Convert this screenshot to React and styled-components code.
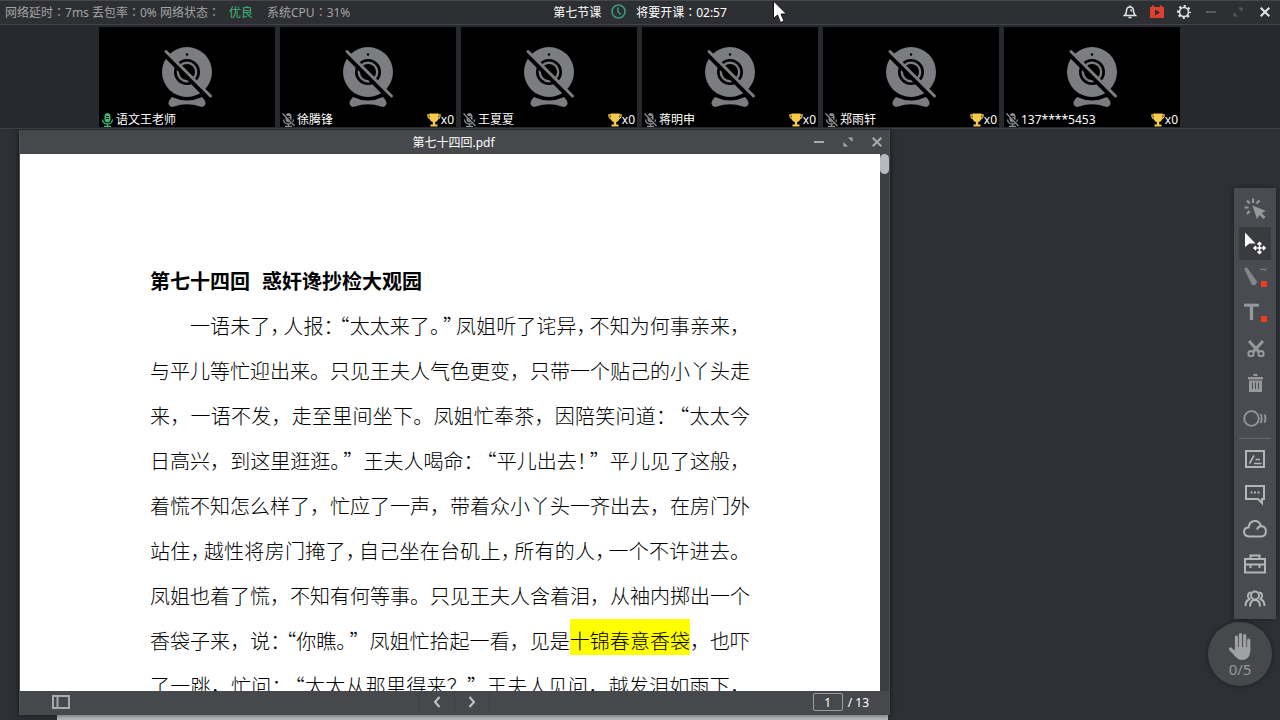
import React from 'react'
import { useState } from 'react'
import styled, { createGlobalStyle } from 'styled-components'

const GlobalStyle = createGlobalStyle`
  * {
    box-sizing: border-box;
  }
  html, body, #root {
    height: 100%;
    margin: 0;
  }
  body {
    overflow: hidden;
    font-family: "Noto Sans", "Noto Sans CJK SC", sans-serif;
    font-size: 12px;
    color: #fff;
  }
  button, input {
    font: inherit;
    color: inherit;
  }
`

const Page = styled.div`
  height: 100vh;
  display: flex;
  flex-direction: column;
  background: #2d3035;
`

const TopBar = styled.header`
  height: 25px;
  flex: none;
  display: grid;
  grid-template-columns: 1fr auto 1fr;
  align-items: center;
  padding: 0 5px 2px;
  background: #2e2f33;
  border-top: 1px solid #45474b;
  border-bottom: 1px solid #414346;
`

const Status = styled.div`
  display: flex;
  color: #a2a3a4;
  white-space: pre;
`

const Good = styled.span`
  color: #3fb878;
  margin: 0 14px 0 9px;
`

/* TC 字体的冒号居中 */
const Colon = styled.span`
  font-family: "Noto Sans CJK TC", sans-serif;
`

const Lesson = styled.div`
  display: flex;
  align-items: center;
  gap: 10px;
`

const TopActions = styled.div`
  display: flex;
  justify-content: flex-end;
  gap: 7px;
`

const IconButton = styled.button`
  width: 20px;
  height: 20px;
  padding: 0;
  border: 0;
  display: flex;
  align-items: center;
  justify-content: center;
  background: none;
  color: ${props => props.$color || '#a9aaac'};
`

const CameraBar = styled.section`
  height: 104px;
  flex: none;
  display: flex;
  justify-content: center;
  gap: 5px;
  padding: 2px 1px 2px 0;
  background: #26292e;
  border-bottom: 1px solid #3b3e42;
`

const CameraBox = styled.div`
  width: 176px;
  height: 100px;
  display: flex;
  flex-direction: column;
  justify-content: flex-end;
  align-items: center;
  gap: 2px;
  background: #000;
`

const CameraFoot = styled.div`
  width: 100%;
  height: 16px;
  display: flex;
  align-items: center;
  padding: 2px 2px 0;
  line-height: 14px;
`

const Name = styled.span`
  flex: 1;
  padding-left: 2px;
`

const Desk = styled.main`
  flex: 1;
  min-height: 0;
  position: relative;
  overflow: hidden;
`

const BackWindow = styled.div`
  position: absolute;
  left: 57px;
  top: 586px;
  width: 831px;
  height: 40px;
  background: #b9bdbd;
`

const PdfWindow = styled.section`
  position: absolute;
  left: 19px;
  top: 1px;
  width: 871px;
  height: 585px;
  display: flex;
  flex-direction: column;
  background: #47484c;
  border: 1px solid #4c4d51;
  border-top: 0;
  border-bottom: 0;
  box-shadow: 0 0 6px rgba(0, 0, 0, 0.6);
`

const TitleBar = styled.div`
  height: 24px;
  flex: none;
  display: grid;
  grid-template-columns: 1fr auto 1fr;
  align-items: center;
  padding: 0 2px 0 0;
`

const FileName = styled.h1`
  grid-column: 2;
  margin: 0;
  font-size: 12px;
  font-weight: 400;
`

const WindowActions = styled.div`
  display: flex;
  justify-content: flex-end;
  gap: 9px;
`

const Viewer = styled.div`
  flex: 1;
  min-height: 0;
  display: flex;
  background: #3d3e40;
`

const Paper = styled.article`
  flex: 1;
  overflow: hidden;
  padding: 104px 130px 0;
  background: #fff;
  color: #000;
  font-family: "Noto Sans CJK SC", sans-serif;
  font-size: 20px;
  line-height: 45px;
  text-spacing-trim: space-all;
`

const Chapter = styled.h2`
  margin: 0;
  display: flex;
  gap: 12px;
  font-size: 20px;
  font-weight: 700;
`

const Line = styled.p`
  margin: 0;
  padding-left: ${props => (props.$indent ? '40px' : '0')};
  font-weight: 300;
  white-space: nowrap;
  text-align: justify;
  text-align-last: justify;
`

const Tight = styled.span`
  font-feature-settings: "halt";
  padding: ${props => (props.$open ? '0 0 0 3px' : '0 3px 0 0')};
`

const Marked = styled.mark`
  padding-top: 7px;
  background: #ff0;
  color: #000;
`

const ScrollThumb = styled.div`
  width: 9px;
  height: 20px;
  border-radius: 5px;
  background: #b4babf;
`

const PdfFoot = styled.div`
  height: 24px;
  flex: none;
  display: grid;
  grid-template-columns: 1fr auto 1fr;
  align-items: center;
  padding: 0 20px 2px;
`

const Contents = styled(IconButton)`
  margin-left: 11px;
`

const Pager = styled.div`
  display: flex;
  border-right: 1px solid #3f4044;
`

const PageButton = styled(IconButton)`
  width: 35px;
  height: 22px;
  border-left: 1px solid #3f4044;
  color: #c3c4c6;
`

const PageNumber = styled.label`
  display: flex;
  justify-content: flex-end;
  align-items: center;
  gap: 5px;
`

const PageInput = styled.input`
  width: 30px;
  height: 18px;
  padding: 0;
  border: 1px solid #9b9c9e;
  border-radius: 2px;
  background: none;
  text-align: center;
`

const ToolBar = styled.nav`
  position: absolute;
  right: 4px;
  top: 59px;
  width: 42px;
  padding: 3px 0;
  display: flex;
  flex-direction: column;
  align-items: center;
  background: #4a4b50;
  box-shadow: 0 0 5px rgba(0, 0, 0, 0.4);
`

const ToolButton = styled(IconButton)`
  width: 32px;
  height: 33px;
  margin: 1px 0;
  background: ${props => (props.$active ? '#3a3b3f' : 'none')};
  color: ${props => (props.$bright ? '#b4b5b7' : '#97989b')};
`

const Divider = styled.hr`
  width: 32px;
  margin: 2px 0;
  border: 0;
  border-top: 1px solid #68696d;
`

const HandButton = styled.button`
  position: absolute;
  right: 8px;
  top: 493px;
  width: 64px;
  height: 64px;
  padding: 10px 0 0;
  border: 0;
  border-radius: 50%;
  display: flex;
  flex-direction: column;
  align-items: center;
  background: #47484c;
  color: #98999c;
  font-size: 15px;
  line-height: 18px;
  box-shadow: 0 0 5px rgba(0, 0, 0, 0.4);
`

const Pointer = styled.svg`
  position: absolute;
  left: 773px;
  top: 0;
`

const members = [
  { name: '语文王老师', teacher: true },
  { name: '徐腾锋', cup: 0 },
  { name: '王夏夏', cup: 0 },
  { name: '蒋明申', cup: 0 },
  { name: '郑雨轩', cup: 0 },
  { name: '137****5453', cup: 0 },
]

// |x| 挤压的标点, [x] 高亮
const lines = [
  '一语未了|，|人报|：||“|太太来了|。||”|凤姐听了诧异|，|不知为何事亲来，',
  '与平儿等忙迎出来。只见王夫人气色更变，只带一个贴己的小丫头走',
  '来，一语不发，走至里间坐下。凤姐忙奉茶，因陪笑问道：|“|太太今',
  '日高兴，到这里逛逛|。|”王夫人喝命：|“|平儿出去|！|”平儿见了这般，',
  '着慌不知怎么样了，忙应了一声，带着众小丫头一齐出去，在房门外',
  '站住|，|越性将房门掩了|，|自己坐在台矶上|，|所有的人|，|一个不许进去。',
  '凤姐也着了慌，不知有何等事。只见王夫人含着泪，从袖内掷出一个',
  '香袋子来，说|：||“|你瞧|。|”凤姐忙拾起一看，见是[十锦春意香袋]，也吓',
  '了一跳，忙问：|“|太太从那里得来？”王夫人见问，越发泪如雨下，',
]

function renderLine(text) {
  return text.split(/(\|[^|]\||\[[^\]]+\])/).map((part, index) => {
    if (part[0] === '|') return <Tight key={index} $open={part[1] === '“'}>{part[1]}</Tight>
    if (part[0] === '[') return <Marked key={index}>{part.slice(1, -1)}</Marked>
    return part
  })
}

function WebcamOff() {
  return (
    <svg width="54" height="64" viewBox="0 0 54 64">
      <path d="M12 52Q27 59 42 52Q46 56 45.500 59Q44 63 40 61.500Q27 57 14 61.500Q10 63 8.500 59Q8 56 12 52Z" fill="#7c7d80" />
      <circle cx="27" cy="27" r="25" fill="#7c7d80" />
      <circle cx="27" cy="27" r="11.700" fill="none" stroke="#000" strokeWidth="2.600" />
      <circle cx="27" cy="27" r="8" fill="#000" />
      <circle cx="27" cy="9.500" r="1.200" fill="#000" />
      <path d="M5 9.500L48 52.500" stroke="#000" strokeWidth="5" />
      <path d="M6 6.500L50.500 51" stroke="#7c7d80" strokeWidth="3" strokeLinecap="round" />
    </svg>
  )
}

function Mic({ on }) {
  return (
    <svg width="13" height="14" viewBox="0 0 13 14" fill="none" stroke={on ? '#3fb878' : '#8d8e90'}>
      <rect x="4" y="0.500" width="5" height="8.500" rx="2.500" fill={on ? '#3fb878' : '#8d8e90'} />
      <path d="M1.500 6.500Q2 11 6.500 11Q11 11 11.500 6.500M6.500 11V13M3 13.500H10" strokeWidth="1.300" />
      <path d="M5 3.500H8M5 5.500H8" stroke="#000" />
      {!on && <path d="M1 0L13 13" stroke="#000" strokeWidth="2" />}
      {!on && <path d="M0.500 0.500L12.500 13" strokeWidth="1.300" />}
    </svg>
  )
}

function Cup() {
  return (
    <svg width="14" height="14" viewBox="0 0 14 14" fill="#f7c94c">
      <path d="M2.500 0.500H11.500V5Q11 8.500 8.200 9V11.500H10.500V13.500H3.500V11.500H5.800V9Q3 8.500 2.500 5Z" />
      <path d="M3 1.800H0.800Q0.800 5.500 3.800 6M11 1.800H13.200Q13.200 5.500 10.200 6" fill="none" stroke="#f7c94c" strokeWidth="1.200" />
    </svg>
  )
}

function CloseIcon({ size = 10 }) {
  return (
    <svg width={size} height={size} viewBox="0 0 10 10" stroke="currentColor" strokeWidth="2">
      <path d="M0.700 0.700L9.300 9.300M9.300 0.700L0.700 9.300" />
    </svg>
  )
}

function MinIcon() {
  return (
    <svg width="10" height="10" viewBox="0 0 10 10" fill="currentColor">
      <rect y="4" width="10" height="2" />
    </svg>
  )
}

function MaxIcon() {
  return (
    <svg width="10" height="10" viewBox="0 0 10 10" fill="currentColor">
      <path d="M5 0.500H9.500V5ZM0.500 5V9.500H5Z" />
    </svg>
  )
}

const tools = [
  {
    label: '激光笔',
    icon: (
      <g>
        <path d="M9.500 8.500L23 14L18.500 16L22.500 20L20.500 22L16.500 18L14 22Z" fill="currentColor" />
        <path d="M10 1.500V6M4 3.500L6.700 6.500M1.500 10.500H5.500M6.500 14L4 17M16.500 3.500L13.500 6.500" stroke="currentColor" strokeWidth="2.200" />
      </g>
    ),
  },
  {
    label: '选择',
    icon: (
      <g>
        <path d="M2 0.500L12.500 11.500L6.500 11.500L2 15Z" fill="#fff" />
        <path d="M16.500 10.500V21.500M11 16H22M14.500 12.500L16.500 10.500L18.500 12.500M14.500 19.500L16.500 21.500L18.500 19.500M13 14L11 16L13 18M20 14L22 16L20 18" fill="none" stroke="#fff" strokeWidth="1.500" />
      </g>
    ),
  },
  {
    label: '画笔',
    icon: (
      <g>
        <path d="M1 1.500L4 0.500L14 14.500L13 17.500L10 18.500L8.500 17Z" fill="#85868a" />
        <path d="M17.500 3Q19 1.200 20.500 2.500T23.500 2" fill="none" stroke="currentColor" />
        <rect x="18" y="14" width="6" height="6" fill="#f03c1e" />
      </g>
    ),
  },
  {
    label: '文字',
    icon: (
      <g>
        <path d="M1 3.200H16" stroke="currentColor" strokeWidth="3" />
        <path d="M8.500 3V18" stroke="currentColor" strokeWidth="3.400" />
        <rect x="18" y="14" width="6" height="6" fill="#f03c1e" />
      </g>
    ),
  },
  {
    label: '剪刀',
    icon: (
      <g fill="none" stroke="currentColor" strokeWidth="2">
        <path d="M6 4L16.500 15.500M20 4L9.500 15.500" strokeWidth="3" />
        <circle cx="8" cy="16.700" r="2.600" />
        <circle cx="18" cy="16.700" r="2.600" />
      </g>
    ),
  },
  {
    label: '删除',
    icon: (
      <g fill="currentColor">
        <path d="M10.500 2H14.500V4H10.500ZM5 5H20V7.500H5Z" />
        <path d="M6 8.500H19V20H6ZM9 10.500V17H10V10.500ZM12 10.500V17H13V10.500ZM15 10.500V17H16V10.500Z" fillRule="evenodd" />
      </g>
    ),
  },
  {
    label: '形状',
    icon: (
      <g fill="none" stroke="currentColor" strokeWidth="1.800">
        <circle cx="8.500" cy="11.500" r="7.300" />
        <path d="M17.500 7Q20 11.500 17.500 16M21.300 7.500Q23.700 11.500 21.300 15.500" />
      </g>
    ),
  },
]

const panels = [
  {
    label: '黑板',
    icon: (
      <g fill="none" stroke="currentColor" strokeWidth="2">
        <path d="M3 4H21V20H3Z" />
        <path d="M6.500 16.500L11 8.500M12.500 12.500H17M11 16.500H18.500" strokeWidth="1.700" />
      </g>
    ),
  },
  {
    label: '聊天',
    icon: (
      <g fill="none" stroke="currentColor" strokeWidth="2">
        <path d="M3 4H21V17H19V21L15 17H3Z" />
        <path d="M7.500 10.500H9.500M11 10.500H13M14.500 10.500H16.500" />
      </g>
    ),
  },
  {
    label: '云盘',
    icon: (
      <path
        d="M6 19.500Q1 19 1 14.500Q1.500 10.500 5.500 10.500Q6.500 4 12 4Q16.500 4 18 9Q23 9.500 23 14.500Q22.500 19.500 18 19.500ZM14 12.500Q15 9.500 18 9"
        fill="none"
        stroke="currentColor"
        strokeWidth="2"
      />
    ),
  },
  {
    label: '工具箱',
    icon: (
      <g fill="none" stroke="currentColor" strokeWidth="2">
        <path d="M2 7H22V20.500H2ZM7.500 7V3.500H16.500V7M2 12.500H22" />
        <path d="M7.500 12.500V16M16.500 12.500V16" />
      </g>
    ),
  },
  {
    label: '花名册',
    icon: (
      <g fill="none" stroke="currentColor" strokeWidth="2">
        <circle cx="12" cy="8.500" r="4" />
        <path d="M7 19.500Q7 13 12 13Q17 13 17 19.500M8 5.500Q4.500 6 5 9.500Q5.500 12 7.500 12.500M16 5.500Q19.500 6 19 9.500Q18.500 12 16.500 12.500M2.500 19Q2.500 14 6 12.500M21.500 19Q21.500 14 18 12.500" />
      </g>
    ),
  },
]

function Tool({ label, active, bright, onClick, children }) {
  return (
    <ToolButton aria-label={label} $active={active} $bright={bright} onClick={onClick}>
      <svg width="24" height="24" viewBox="0 0 24 24">{children}</svg>
    </ToolButton>
  )
}

export default function App() {
  const [page, setPage] = useState('1')
  const [tool, setTool] = useState('选择')

  return (
    <Page>
      <GlobalStyle />

      <TopBar>
        <Status>
          <span>网络延时<Colon>：</Colon>7ms 丢包率<Colon>：</Colon>0% 网络状态<Colon>：</Colon></span>
          <Good>优良</Good>
          <span>系统CPU<Colon>：</Colon>31%</span>
        </Status>
        <Lesson>
          <span>第七节课</span>
          <svg width="15" height="15" viewBox="0 0 15 15" fill="none" stroke="#3a9d78" strokeWidth="1.500">
            <circle cx="7.500" cy="7.500" r="6.500" />
            <path d="M7 3.500V8L10 10.500" />
          </svg>
          <span>将要开课<Colon>：</Colon>02:57</span>
        </Lesson>
        <TopActions>
          <IconButton aria-label="通知" $color="#e4e5e6">
            <svg width="14" height="14" viewBox="0 0 14 14" fill="none" stroke="currentColor" strokeWidth="1.500">
              <path d="M1.500 10.500Q3.500 9 3.500 6Q3.500 2 7 2Q10.500 2 10.500 6Q10.500 9 12.500 10.500ZM7 0.500V2M5.500 12.500H8.500M7.500 4.500Q8.500 5 8.500 6.500" />
            </svg>
          </IconButton>
          <IconButton aria-label="录课">
            <svg width="14" height="14" viewBox="0 0 14 14">
              <path d="M0 2H2V0.500H4V2H10V0.500H12V2H14V13H0Z" fill="#dc4030" />
              <path d="M5 4.500L10 7.500L5 10.500Z" fill="#3b2a2c" />
            </svg>
          </IconButton>
          <IconButton aria-label="设置" $color="#e4e5e6">
            <svg width="14" height="14" viewBox="0 0 14 14" fill="none" stroke="currentColor">
              <circle cx="7" cy="7" r="4.500" strokeWidth="1.600" />
              <circle cx="7" cy="7" r="6" strokeWidth="2" strokeDasharray="2.200 2.512" strokeDashoffset="1.100" />
            </svg>
          </IconButton>
          <IconButton aria-label="最小化" $color="#5a5b5f"><MinIcon /></IconButton>
          <IconButton aria-label="最大化" $color="#5a5b5f"><MaxIcon /></IconButton>
          <IconButton aria-label="关闭" $color="#e4e5e6"><CloseIcon /></IconButton>
        </TopActions>
      </TopBar>

      <CameraBar>
        {members.map((member, index) => {
          return (
            <CameraBox key={index}>
              <WebcamOff />
              <CameraFoot>
                <Mic on={member.teacher} />
                <Name>{member.name}</Name>
                {!member.teacher && <Cup />}
                {!member.teacher && <span>x{member.cup}</span>}
              </CameraFoot>
            </CameraBox>
          )
        })}
      </CameraBar>

      <Desk>
        <BackWindow />
        <PdfWindow>
          <TitleBar>
            <FileName>第七十四回.pdf</FileName>
            <WindowActions>
              <IconButton aria-label="最小化"><MinIcon /></IconButton>
              <IconButton aria-label="最大化"><MaxIcon /></IconButton>
              <IconButton aria-label="关闭"><CloseIcon /></IconButton>
            </WindowActions>
          </TitleBar>
          <Viewer>
            <Paper>
              <Chapter>
                <span>第七十四回</span> <span>惑奸谗抄检大观园</span>
              </Chapter>
              {lines.map((line, index) => (
                <Line key={index} $indent={index === 0}>{renderLine(line)}</Line>
              ))}
            </Paper>
            <ScrollThumb />
          </Viewer>
          <PdfFoot>
            <Contents aria-label="目录">
              <svg width="18" height="14" viewBox="0 0 18 14" fill="none" stroke="currentColor" strokeWidth="2">
                <path d="M1 1H17V13H1ZM5.500 1V13" />
              </svg>
            </Contents>
            <Pager>
              <PageButton aria-label="上一页">
                <svg width="8" height="12" viewBox="0 0 8 12" fill="none" stroke="currentColor" strokeWidth="2">
                  <path d="M6.500 1L2 6L6.500 11" />
                </svg>
              </PageButton>
              <PageButton aria-label="下一页">
                <svg width="8" height="12" viewBox="0 0 8 12" fill="none" stroke="currentColor" strokeWidth="2">
                  <path d="M1.500 1L6 6L1.500 11" />
                </svg>
              </PageButton>
            </Pager>
            <PageNumber>
              <PageInput aria-label="页码" value={page} onChange={e => setPage(e.target.value)} />
              <span>/ 13</span>
            </PageNumber>
          </PdfFoot>
        </PdfWindow>

        <ToolBar>
          {tools.map(item => (
            <Tool key={item.label} label={item.label} active={tool === item.label} onClick={() => setTool(item.label)}>
              {item.icon}
            </Tool>
          ))}
          <Divider />
          {panels.map(item => (
            <Tool key={item.label} label={item.label} bright>{item.icon}</Tool>
          ))}
        </ToolBar>

        <HandButton aria-label="举手">
          <svg width="24" height="28" viewBox="0 0 24 28" fill="none" stroke="#a0a1a4" strokeWidth="3.200" strokeLinecap="round">
            <path d="M8.500 16V5M12.500 16V2.500M16.700 16V3.500M20.700 18V8M2.500 17L7.500 22" />
            <path d="M7 15H22.300V20Q21 28 14 28Q9.500 28 6 23Z" fill="#a0a1a4" stroke="none" />
          </svg>
          <span>0/5</span>
        </HandButton>
      </Desk>

      <Pointer width="15" height="24" viewBox="0 0 15 24">
        <path d="M0.500 1V18.500L4.500 15L7.500 22.500L11 21L8 14H13.500Z" fill="#fff" stroke="#111" />
      </Pointer>
    </Page>
  )
}
